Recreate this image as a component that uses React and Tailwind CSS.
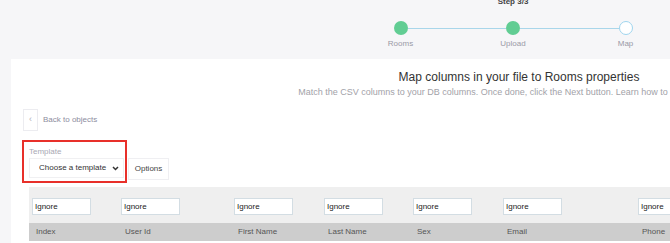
import { useState } from 'react';

const steps = [
  { label: 'Rooms', done: true },
  { label: 'Upload', done: true },
  { label: 'Map', done: false },
];

const columns = ['Index', 'User Id', 'First Name', 'Last Name', 'Sex', 'Email', 'Phone'];

const Stepper = () => (
  <div className="mx-auto w-[239px] flex items-start">
    {steps.map((step, i) => (
      <div key={step.label} className="contents">
        <div className="w-[14px] flex flex-col items-center">
          <div
            className={`w-[14px] h-[14px] rounded-full ${step.done ? 'bg-[#61cd93]' : 'bg-white border border-[#9fd5ee]'}`}
          />
          <span className="mt-[3px] text-[8px] leading-[12px] text-[#9a9aa6] whitespace-nowrap">
            {step.label}
          </span>
        </div>
        {i < steps.length - 1 && <div className="flex-1 h-px mt-[7px] bg-[#a9d6ea]" />}
      </div>
    ))}
  </div>
);

const App = () => {
  const [template, setTemplate] = useState('');
  const [mapping, setMapping] = useState(columns.map(() => 'Ignore'));

  return (
    <div className="w-[670px] h-[243px] overflow-hidden bg-[#f6f6f8] font-['Liberation_Sans',Arial,sans-serif]">
      <div className="ml-[11px] w-[1004px] flex flex-col">
        {/* header with steps */}
        <div className="h-[59px] flex flex-col">
          <p className="-mt-[3px] text-center text-[8px] leading-[10px] font-bold text-[#444]">Step 3/3</p>
          <div className="mt-[14px]">
            <Stepper />
          </div>
        </div>

        {/* card */}
        <div className="bg-white h-[200px] pl-[12px] flex flex-col">
          <h2 className="pt-[11px] text-center text-[12px] leading-[14px] text-[#333]">
            Map columns in your file to Rooms properties
          </h2>
          <p className="mt-[2px] -ml-[12px] text-center text-[9px] leading-[12px] text-[#a2a2a8] whitespace-nowrap">
            Match the CSV columns to your DB columns. Once done, click the Next button. Learn how to import records
          </p>

          <div className="mt-[11px] flex items-center">
            <button className="w-[15px] h-[22px] border border-[#ececf0] flex items-center justify-center text-[9px] text-[#b0b0b8]">
              &lsaquo;
            </button>
            <span className="ml-[5px] text-[8px] text-[#8d8da0]">Back to objects</span>
          </div>

          <div className="mt-[9px] -ml-[1px] flex items-end">
            <div className="border-2 border-[#e8302a] pl-[5px] pr-[1px] pt-[4px] pb-[3px]">
              <label className="block text-[8px] leading-[11px] text-[#a9a9b4]">Template</label>
              <div className="relative mt-[1px] w-[95px] h-[20px] border border-[#f0f0f2] bg-white flex items-center">
                <select
                  value={template}
                  onChange={(e) => setTemplate(e.target.value)}
                  className="appearance-none w-full h-full bg-transparent pl-[9px] text-[8px] text-[#333] outline-none"
                >
                  <option value="">Choose a template</option>
                </select>
                <svg
                  className="absolute right-[4px] top-[7px] pointer-events-none"
                  width="7"
                  height="5"
                  viewBox="0 0 7 5"
                >
                  <path d="M1 1l2.5 2.5L6 1" fill="none" stroke="#333" strokeWidth="1.5" />
                </svg>
              </div>
            </div>
            <button className="ml-[1px] mb-[3px] w-[41px] h-[22px] border border-[#efeff2] text-[8px] text-[#444]">
              Options
            </button>
          </div>

          {/* mapping table */}
          <div className="mt-[4px] ml-[6px] bg-[#efefef] pt-[11px]">
            <div className="pl-[3px] grid grid-cols-[89px_113px_90px_89px_90px_135px_89px]">
              {columns.map((col, i) => (
                <input
                  key={col}
                  value={mapping[i]}
                  onChange={(e) => {
                    const next = [...mapping];
                    next[i] = e.target.value;
                    setMapping(next);
                  }}
                  className="w-[59px] h-[17px] border border-[#d3dde3] bg-white pl-[2px] text-[8px] text-[#222] outline-none"
                />
              ))}
            </div>
            <div className="mt-[8px] h-[18px] bg-[#cdcdcd] pl-[3px] grid grid-cols-[89px_113px_90px_89px_90px_135px_89px] items-center">
              {columns.map((col) => (
                <span key={col} className="pl-[4px] text-[8px] text-[#555]">
                  {col}
                </span>
              ))}
            </div>
          </div>
        </div>
      </div>
    </div>
  );
};

export default App;
